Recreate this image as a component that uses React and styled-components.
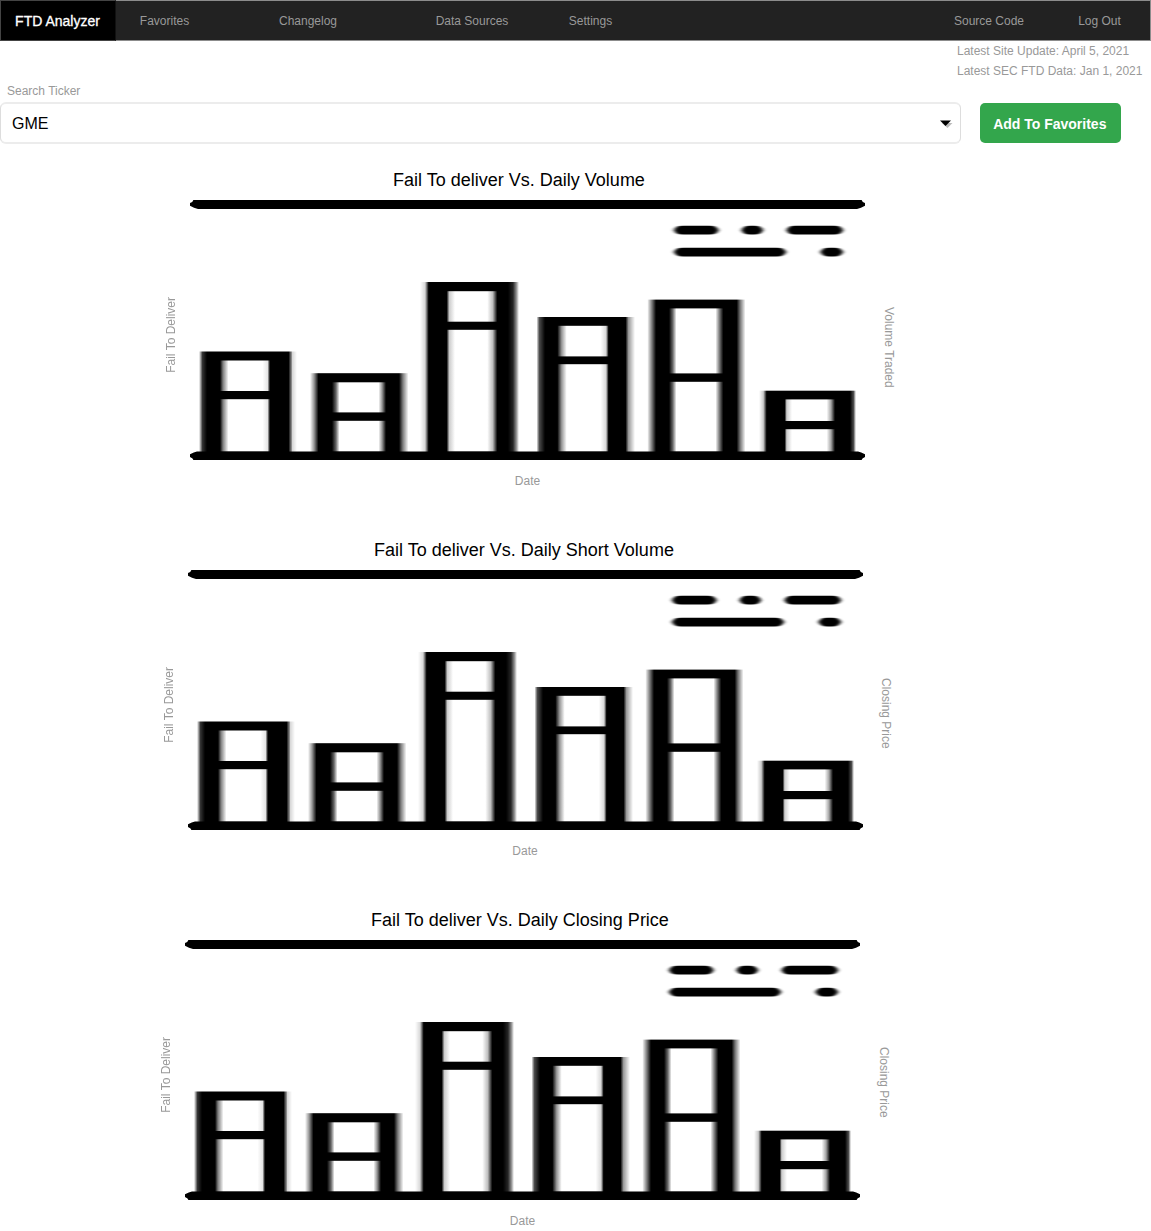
import React, { useId } from "react";
import styled, { createGlobalStyle } from "styled-components";

const GlobalStyle = createGlobalStyle`
  *, *::before, *::after { box-sizing: border-box; }
  body {
    margin: 0;
    background: #fff;
    color: #999;
    font-family: "Liberation Sans", Arial, sans-serif;
    font-size: 12px;
    line-height: 20px;
  }
`;

const Page = styled.div`
  width: 1151px;
  height: 1231px;
  overflow: hidden;
`;

const NavBar = styled.nav`
  display: flex;
  height: 41px;
  background: #222;
  border: 1px solid #8c8c8c;
  border-left: 0;
`;

const Brand = styled.a`
  width: 116px;
  height: 41px;
  margin-top: -1px;
  padding-right: 1px;
  border: 1px solid #444;
  border-right-color: #111;
  background: #000;
  color: #fff;
  font-size: 14px;
  line-height: 40px;
  text-align: center;
  white-space: nowrap;
  -webkit-text-stroke: 0.3px #fff;
`;

const NavLink = styled.a`
  width: ${(p) => p.$width}px;
  line-height: 40px;
  text-align: center;
  white-space: nowrap;
`;

const Spacer = styled.div`
  flex: 1;
`;

const Updates = styled.div`
  height: 40px;
  padding-left: 957px;
  white-space: nowrap;
`;

const SearchLabel = styled.label`
  display: block;
  height: 21px;
  padding-left: 7px;
`;

const SearchRow = styled.div`
  display: flex;
  height: 42px;
`;

const Select = styled.div`
  display: flex;
  align-items: center;
  justify-content: space-between;
  width: 961px;
  padding: 2px 7px 0 11px;
  border: solid #ececec;
  border-width: 2px 1px;
  border-left-color: #ddd;
  border-right-color: #ddd;
  border-radius: 6px;
  color: #000;
  font-size: 16px;
`;

const FavoriteButton = styled.button`
  width: 140.5px;
  height: 40px;
  margin: 1px 0 0 19.3px;
  padding: 0 1.5px 0 0;
  border: 0;
  border-radius: 5px;
  background: #33a64c;
  color: #fff;
  font: bold 14px/42px "Liberation Sans", Arial, sans-serif;
  white-space: nowrap;
`;

const Charts = styled.main`
  display: flex;
  flex-direction: column;
  gap: 30px;
  padding-top: 16px;
`;

const ChartSection = styled.section`
  display: grid;
  grid-template: 40px 260px 40px / 30px 675px 47px;
  margin-left: ${(p) => p.$indent}px;
`;

const Title = styled.h2`
  grid-column: 2;
  margin: 0;
  padding-right: ${(p) => p.$inset}px;
  color: #000;
  font-size: 18px;
  font-weight: 400;
  line-height: 40px;
  text-align: center;
`;

const AxisLabel = styled.div`
  grid-row: 2;
  grid-column: ${(p) => (p.$side === "left" ? 1 : 3)};
  display: flex;
  align-items: center;
  justify-content: center;
  padding-top: ${(p) => p.$drop}px;
  padding-right: ${(p) => (p.$side === "left" ? 8 : 0)}px;

  span {
    writing-mode: vertical-rl;
    transform: ${(p) => (p.$side === "left" ? "rotate(180deg)" : "none")};
    white-space: nowrap;
  }
`;

const Plot = styled.svg`
  grid-row: 2;
  grid-column: 2;
  display: block;
`;

const DateLabel = styled.div`
  grid-column: 2;
  line-height: 42px;
  text-align: center;
`;

// Each bar: edge stops are [x, opacity]; top, windowTop and the crossbar are y values.
const bars = [
  {
    outer: [[9, 0], [12.5, 0.8], [17, 1], [98.5, 1], [101.5, 0.45], [102.5, 0.15], [107, 0]],
    pane: [[30, 0], [33, 0.5], [38.5, 1], [72.5, 1], [77.5, 0.9], [80, 0]],
    top: 151.5, windowTop: 160.5, cross: [191, 199.2],
  },
  {
    outer: [[120, 0], [124, 0.4], [128.5, 1], [209, 1], [213, 0.5], [218.5, 0]],
    pane: [[142, 0], [146, 0.4], [149.5, 1], [188.5, 1], [192, 0.6], [196, 0]],
    top: 173.2, windowTop: 182.3, cross: [212.4, 220.8],
  },
  {
    outer: [[230, 0], [235, 0.15], [237, 0.6], [238.7, 1], [318, 1], [323, 0.85], [326.3, 0.45], [329, 0]],
    pane: [[256.7, 0], [259.3, 0.8], [265, 1], [297.3, 1], [302.7, 0.75], [307.3, 0]],
    top: 82, windowTop: 91.2, cross: [121.7, 129.8],
  },
  {
    outer: [[346.5, 0], [349.3, 0.7], [355, 1], [435.5, 1], [438.5, 0.4], [445, 0]],
    pane: [[367.3, 0], [371.7, 0.6], [376.7, 1], [410.7, 1], [416, 0.85], [418.7, 0]],
    top: 117, windowTop: 125.8, cross: [156.4, 164.2],
  },
  {
    outer: [[457.3, 0], [461.7, 0.5], [466, 1], [546.7, 1], [550, 0.55], [555.5, 0]],
    pane: [[479, 0], [482.7, 0.4], [486.5, 1], [525.5, 1], [529.3, 0.5], [533.3, 0]],
    top: 99.6, windowTop: 108.4, cross: [173.4, 181.8],
  },
  {
    outer: [[569, 0], [573.3, 0.2], [576.7, 1], [660, 1], [663.5, 0.7], [666, 0]],
    pane: [[594.7, 0], [596.7, 0.8], [602, 1], [636.7, 1], [641, 0.65], [645, 0]],
    top: 190.7, windowTop: 199.4, cross: [221, 229.2],
  },
];

const BASE = 251.6;

const dashes = [
  [484, 528.5, 30.2], [551.5, 573, 30.2], [596.5, 653, 30.2],
  [484, 596, 52.1], [630.5, 653, 52.1],
];

function EdgeGradient({ id, color, stops }) {
  const from = stops[0][0];
  const to = stops[stops.length - 1][0];
  return (
    <linearGradient id={id} gradientUnits="userSpaceOnUse" x1={from} x2={to} y1="0" y2="0">
      {stops.map(([x, opacity]) => (
        <stop key={x} offset={(x - from) / (to - from)} stopColor={color} stopOpacity={opacity} />
      ))}
    </linearGradient>
  );
}

function Bar({ id, bar }) {
  const { outer, pane, top, windowTop, cross } = bar;
  const left = outer[0][0];
  const width = outer[outer.length - 1][0] - left;
  const paneLeft = pane[0][0];
  const paneWidth = pane[pane.length - 1][0] - paneLeft;
  return (
    <g>
      <EdgeGradient id={`${id}o`} color="#000" stops={outer} />
      <EdgeGradient id={`${id}p`} color="#fff" stops={pane} />
      <rect x={left} y={top} width={width} height={BASE + 2 - top} fill={`url(#${id}o)`} />
      <rect x={paneLeft} y={windowTop} width={paneWidth} height={cross[0] - windowTop} fill={`url(#${id}p)`} />
      <rect x={paneLeft} y={cross[1]} width={paneWidth} height={BASE - cross[1]} fill={`url(#${id}p)`} />
    </g>
  );
}

function Dash({ from, to, y }) {
  return (
    <path
      d={`M${from} ${y} Q${from + 2} ${y - 4.4} ${from + 8} ${y - 4.4} H${to - 8} Q${to - 2} ${y - 4.4} ${to} ${y} Q${to - 2} ${y + 4.4} ${to - 8} ${y + 4.4} H${from + 8} Q${from + 2} ${y + 4.4} ${from} ${y}Z`}
    />
  );
}

function BarPlot() {
  const id = useId().replace(/[^a-zA-Z0-9]/g, "");
  return (
    <Plot width="675" height="260" viewBox="0 0 675 260" aria-hidden="true">
      <defs>
        <filter id={`${id}v`} filterUnits="userSpaceOnUse" x="-5" y="-5" width="685" height="270" colorInterpolationFilters="sRGB">
          <feGaussianBlur stdDeviation="0.7 0.7" />
        </filter>
        <filter id={`${id}d`} filterUnits="userSpaceOnUse" x="470" y="15" width="200" height="50" colorInterpolationFilters="sRGB">
          <feGaussianBlur stdDeviation="2 0.7" />
        </filter>
      </defs>
      <g filter={`url(#${id}v)`}>
        {bars.map((bar, i) => (
          <Bar key={bar.top} id={`${id}b${i}`} bar={bar} />
        ))}
        <path d="M-4 3 H0 Q3 2 4 -1 V-4 H671 V-1 Q672 2 675 3 H679 V5.8 H675 Q671 8.2 667 8.9 H8 Q4 8.2 0 5.8 H-4Z" />
        <path d="M-4 254.2 H0 Q4 252.2 7 251.6 H668 Q671 252.2 675 254.2 H679 V257 H675 Q672 258 671 261 V264 H4 V261 Q3 258 0 257 H-4Z" />
      </g>
      <g filter={`url(#${id}d)`}>
        {dashes.map(([from, to, y]) => (
          <Dash key={`${from}-${y}`} from={from} to={to} y={y} />
        ))}
      </g>
    </Plot>
  );
}

const charts = [
  { title: "Fail To deliver Vs. Daily Volume", right: "Volume Traded", indent: 160, inset: 17, drop: 35 },
  { title: "Fail To deliver Vs. Daily Short Volume", right: "Closing Price", indent: 157.5, inset: 2, drop: 27 },
  { title: "Fail To deliver Vs. Daily Closing Price", right: "Closing Price", indent: 155, inset: 5, drop: 25 },
];

export default function App() {
  return (
    <Page>
      <GlobalStyle />
      <NavBar>
        <Brand>FTD Analyzer</Brand>
        <NavLink $width={97}>Favorites</NavLink>
        <NavLink $width={190}>Changelog</NavLink>
        <NavLink $width={138}>Data Sources</NavLink>
        <NavLink $width={99}>Settings</NavLink>
        <Spacer />
        <NavLink $width={120}>Source Code</NavLink>
        <NavLink $width={101}>Log Out</NavLink>
      </NavBar>
      <Updates>
        <div>Latest Site Update: April 5, 2021</div>
        <div>Latest SEC FTD Data: Jan 1, 2021</div>
      </Updates>
      <SearchLabel>Search Ticker</SearchLabel>
      <SearchRow>
        <Select>
          <span>GME</span>
          <svg width="14" height="8" viewBox="0 0 14 8" aria-hidden="true">
            <path d="M3 3H13.5L8.5 8Z" fill="#bbb" />
            <path d="M1 0.5H12L6.5 6Z" fill="#000" />
          </svg>
        </Select>
        <FavoriteButton>Add To Favorites</FavoriteButton>
      </SearchRow>
      <Charts>
        {charts.map((chart) => (
          <ChartSection key={chart.title} $indent={chart.indent}>
            <Title $inset={chart.inset}>{chart.title}</Title>
            <AxisLabel $side="left" $drop={10}>
              <span>Fail To Deliver</span>
            </AxisLabel>
            <BarPlot />
            <AxisLabel $side="right" $drop={chart.drop}>
              <span>{chart.right}</span>
            </AxisLabel>
            <DateLabel>Date</DateLabel>
          </ChartSection>
        ))}
      </Charts>
    </Page>
  );
}
